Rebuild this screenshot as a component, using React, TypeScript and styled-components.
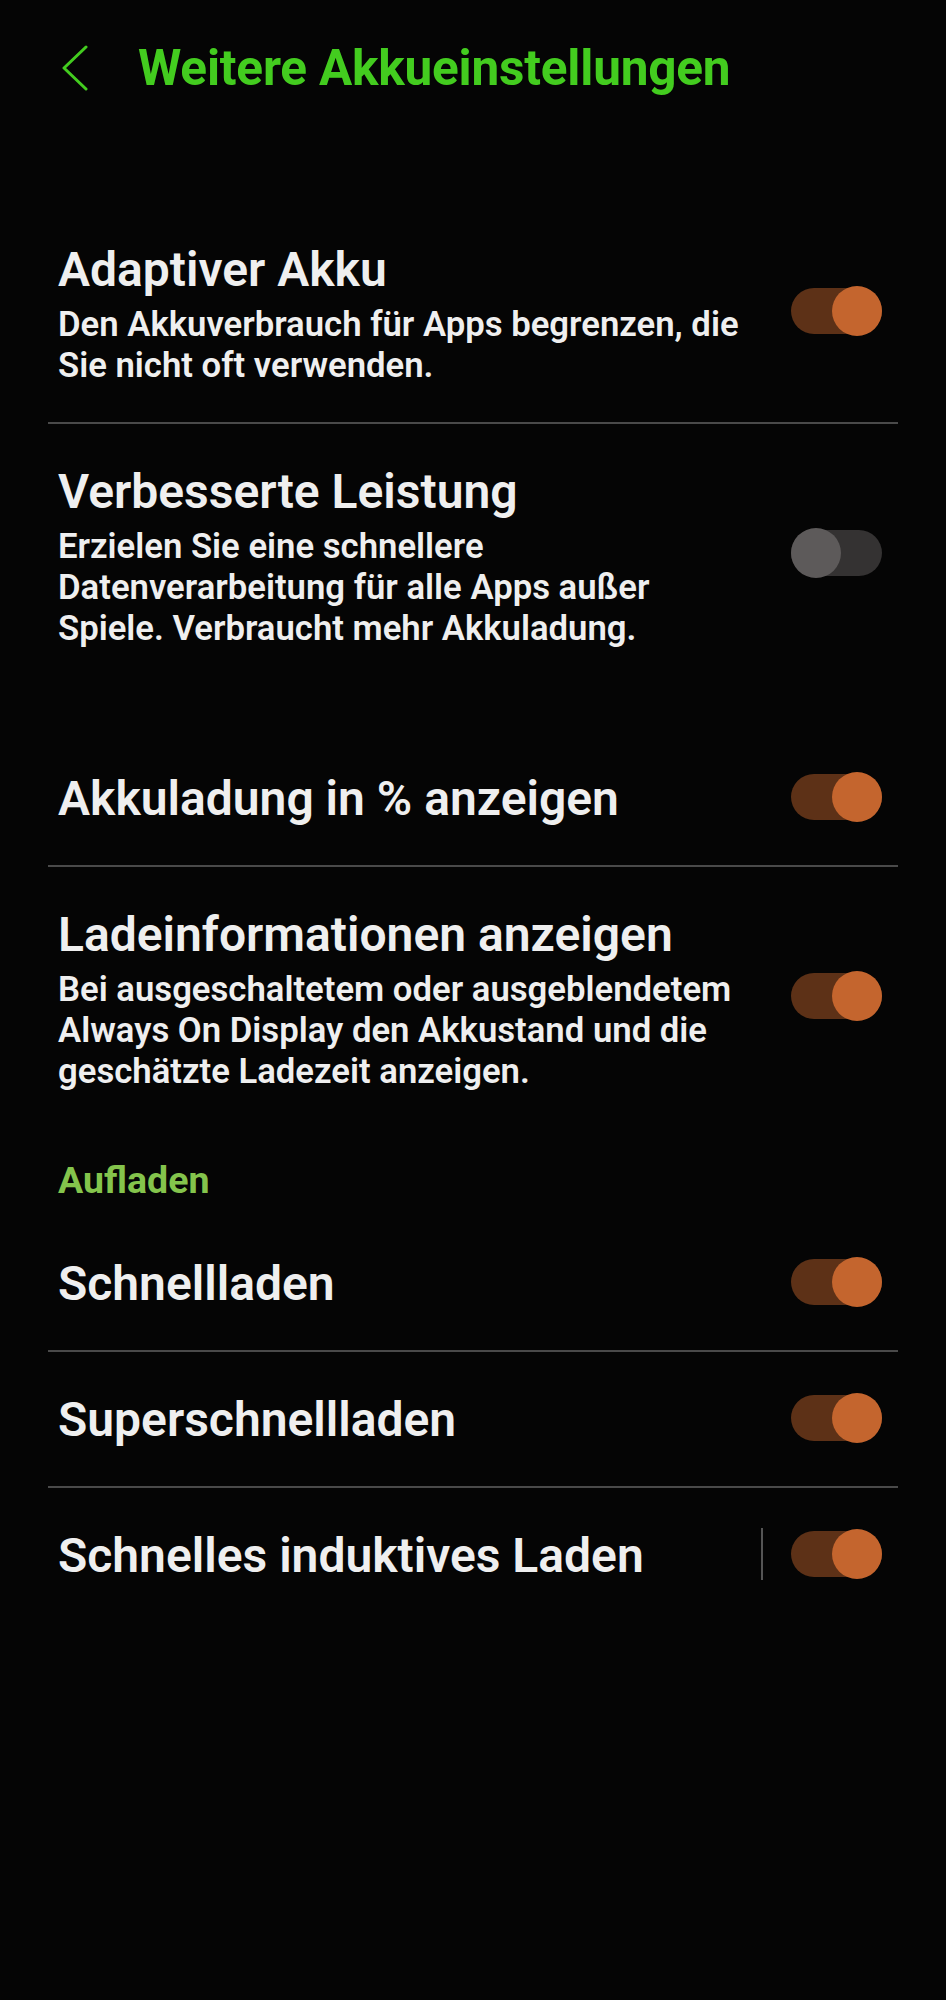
import React from "react";
import styled, { createGlobalStyle } from "styled-components";

const Global = createGlobalStyle`
  html, body { margin: 0; padding: 0; background: #050505; }
  body { font-family: Roboto, "Noto Sans", "Liberation Sans", sans-serif; -webkit-font-smoothing: antialiased; }
  * { box-sizing: border-box; }
`;

const Page = styled.div`
  width: 946px;
  min-height: 2000px;
  background: #050505;
  color: #efefef;
  display: flex;
  flex-direction: column;
`;

const Header = styled.header`
  height: 136px;
  display: flex;
  align-items: center;
  padding-left: 61px;
  gap: 49px;
`;

const BackButton = styled.button`
  background: none;
  border: none;
  padding: 0;
  width: 28px;
  height: 46px;
  display: flex;
  align-items: center;
  justify-content: center;
  cursor: pointer;
`;

const HeaderTitle = styled.h1`
  margin: 0;
  font-size: 49.5px;
  font-weight: 700;
  color: #43cc1f;
  letter-spacing: -0.2px;
`;

const Group = styled.section<{ $top: number }>`
  margin: ${(p) => p.$top}px 48px 0 48px;
  display: flex;
  flex-direction: column;
`;

const Row = styled.div<{ $divider?: boolean }>`
  display: flex;
  align-items: center;
  padding: 33px 16px 36px 10px;
  border-bottom: ${(p) => (p.$divider ? "2px solid #4a4a4a" : "none")};
`;

const TextCol = styled.div`
  flex: 1;
  min-width: 0;
  display: flex;
  flex-direction: column;
`;

const Title = styled.div`
  padding-top: 4px;
  font-size: 48px;
  line-height: 61px;
  font-weight: 600;
  color: #efefef;
  white-space: nowrap;
`;

const Summary = styled.div`
  margin-top: 4px;
  font-size: 34.7px;
  line-height: 41px;
  font-weight: 600;
  color: #efefef;
  white-space: nowrap;
`;

const VDivider = styled.div`
  width: 2px;
  height: 52px;
  background: #555;
  margin-right: 28px;
`;

const Track = styled.div<{ $on: boolean }>`
  position: relative;
  width: 91px;
  height: 46px;
  border-radius: 23px;
  background: ${(p) => (p.$on ? "#5d3117" : "#343232")};
  flex-shrink: 0;
`;

const Thumb = styled.div<{ $on: boolean }>`
  position: absolute;
  top: -2px;
  ${(p) => (p.$on ? "right: 0;" : "left: 0;")}
  width: 50px;
  height: 50px;
  border-radius: 50%;
  background: ${(p) => (p.$on ? "#c4652e" : "#5d5a5a")};
`;

const SectionHeader = styled.div`
  margin: 30px 48px 14px 58px;
  font-size: 37.5px;
  line-height: 44px;
  font-weight: 700;
  color: #84c44c;
`;

const Toggle = ({ on }: { on: boolean }) => (
  <Track $on={on}>
    <Thumb $on={on} />
  </Track>
);

type Item = {
  title: string;
  lines?: string[];
  on: boolean;
  divider?: boolean;
  separated?: boolean;
};

const SettingRow = ({ item }: { item: Item }) => (
  <Row $divider={item.divider}>
    <TextCol>
      <Title>{item.title}</Title>
      {item.lines && (
        <Summary>
          {item.lines.map((l, i) => (
            <React.Fragment key={i}>
              {i > 0 && <br />}
              {l}
            </React.Fragment>
          ))}
        </Summary>
      )}
    </TextCol>
    {item.separated && <VDivider />}
    <Toggle on={item.on} />
  </Row>
);

export default function App() {
  return (
    <Page>
      <Global />
      <Header>
        <BackButton aria-label="Zurück">
          <svg width="28" height="46" viewBox="0 0 28 46" fill="none">
            <path d="M25 2 L3 23 L25 44" stroke="#43cc1f" strokeWidth="3" strokeLinecap="round" strokeLinejoin="round" />
          </svg>
        </BackButton>
        <HeaderTitle>Weitere Akkueinstellungen</HeaderTitle>
      </Header>

      <Group $top={66}>
        <SettingRow
          item={{
            title: "Adaptiver Akku",
            lines: ["Den Akkuverbrauch für Apps begrenzen, die", "Sie nicht oft verwenden."],
            on: true,
            divider: true,
          }}
        />
        <SettingRow
          item={{
            title: "Verbesserte Leistung",
            lines: [
              "Erzielen Sie eine schnellere",
              "Datenverarbeitung für alle Apps außer",
              "Spiele. Verbraucht mehr Akkuladung.",
            ],
            on: false,
          }}
        />
      </Group>

      <Group $top={46}>
        <SettingRow item={{ title: "Akkuladung in % anzeigen", on: true, divider: true }} />
        <SettingRow
          item={{
            title: "Ladeinformationen anzeigen",
            lines: [
              "Bei ausgeschaltetem oder ausgeblendetem",
              "Always On Display den Akkustand und die",
              "geschätzte Ladezeit anzeigen.",
            ],
            on: true,
          }}
        />
      </Group>

      <SectionHeader>Aufladen</SectionHeader>

      <Group $top={0}>
        <SettingRow item={{ title: "Schnellladen", on: true, divider: true }} />
        <SettingRow item={{ title: "Superschnellladen", on: true, divider: true }} />
        <SettingRow item={{ title: "Schnelles induktives Laden", on: true, separated: true }} />
      </Group>
    </Page>
  );
}
